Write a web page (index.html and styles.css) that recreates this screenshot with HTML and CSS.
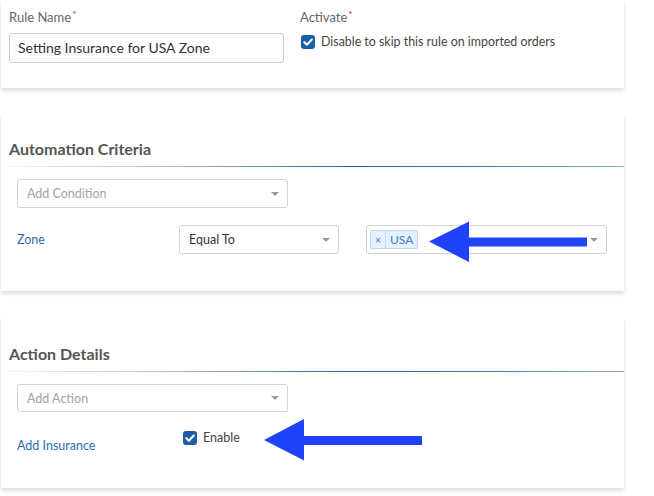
FILE: index.html
```
<!DOCTYPE html>
<html>
<head>
<meta charset="utf-8">
<link rel="stylesheet" href="styles.css">
</head>
<body>
<div class="page">
  <section class="card card-rule">
    <div class="field name-field">
      <div class="label">Rule Name<span class="req">*</span></div>
      <div class="input">Setting Insurance for USA Zone</div>
    </div>
    <div class="field">
      <div class="label">Activate<span class="req">*</span></div>
      <div class="check-row top-check">
        <span class="checkbox"><svg viewBox="0 0 14 14" width="14" height="14"><path d="M3.3 7.2 L5.9 9.7 L10.8 4.6" fill="none" stroke="#fff" stroke-width="2.1" stroke-linecap="round" stroke-linejoin="round"/></svg></span>
        <span class="check-text">Disable to skip this rule on imported orders</span>
      </div>
    </div>
  </section>

  <section class="card card-section card-criteria">
    <h2 class="section-title">Automation Criteria</h2>
    <div class="section-body">
      <div class="select wide"><span class="placeholder">Add Condition</span><span class="caret"></span></div>
      <div class="row row-zone">
        <div class="row-label">Zone</div>
        <div class="select mid"><span class="value">Equal To</span><span class="caret"></span></div>
        <div class="select multi">
          <span class="tag"><span class="tag-x">×</span><span class="tag-text">USA</span></span>
          <span class="spacer"></span>
          <span class="clear">×</span>
          <span class="caret"></span>
        </div>
      </div>
    </div>
  </section>

  <section class="card card-section card-action">
    <h2 class="section-title">Action Details</h2>
    <div class="section-body">
      <div class="select wide"><span class="placeholder">Add Action</span><span class="caret"></span></div>
      <div class="row row-ins">
        <div class="row-label ins-label">Add Insurance</div>
        <div class="check-row enable-check">
          <span class="checkbox"><svg viewBox="0 0 14 14" width="14" height="14"><path d="M3.3 7.2 L5.9 9.7 L10.8 4.6" fill="none" stroke="#fff" stroke-width="2.1" stroke-linecap="round" stroke-linejoin="round"/></svg></span>
          <span class="check-text enable-text">Enable</span>
        </div>
      </div>
    </div>
  </section>

  <svg class="arrows" width="654" height="496" viewBox="0 0 654 496">
    <polygon points="429,241.5 469,221.5 469,262" fill="#1f43fb"/>
    <rect x="468" y="237.5" width="119" height="9" fill="#1f43fb"/>
    <polygon points="264,440 304,419 304,460.5" fill="#1f43fb"/>
    <rect x="303" y="436" width="119" height="9" fill="#1f43fb"/>
  </svg>
</div>
</body>
</html>
```
FILE: styles.css
```
* { box-sizing: border-box; }
html, body { margin: 0; padding: 0; background: #fff; }
body {
  font-family: Lato, "Open Sans", Arial, sans-serif;
  color: #444;
  width: 654px;
  height: 496px;
  overflow: hidden;
}
.page { position: relative; width: 654px; height: 496px; }

.card {
  margin-left: 1px;
  width: 623px;
  background: #fff;
  box-shadow: 0 3px 4px rgba(0, 0, 0, 0.13), 0 0 1px rgba(0, 0, 0, 0.06);
}

.card-rule {
  display: flex;
  gap: 16px;
  height: 88px;
  padding: 9px 8px 0 8px;
}
.name-field { width: 275px; }
.label {
  font-size: 13px;
  line-height: 16px;
  height: 16px;
  color: #666;
}
.req { color: #e5252a; font-size: 10px; line-height: 0; vertical-align: 4px; margin-left: 1px; }
.input {
  margin-top: 8px;
  height: 30px;
  border: 1px solid #cfcfcf;
  border-radius: 3px;
  padding: 0 8px;
  font-size: 14px;
  line-height: 28px;
  color: #333;
}

.check-row { display: flex; align-items: center; }
.top-check { margin-top: 9px; height: 16px; padding-left: 1px; }
.checkbox {
  width: 14px;
  height: 14px;
  border-radius: 3px;
  background: #1d5ea8;
  display: inline-flex;
  flex: none;
}
.checkbox svg { display: block; }
.check-text { margin-left: 6px; font-size: 12.4px; color: #444; line-height: 16px; }

.card-criteria { margin-top: 26px; padding: 0 0 37px 8px; }
.card-action { margin-top: 27px; padding: 0 0 34px 8px; }
.section-title {
  margin: 0;
  font-size: 16px;
  line-height: 20px;
  font-weight: 700;
  color: #555;
  padding-bottom: 7px;
  border-bottom: 1px solid transparent;
  border-image: linear-gradient(to right, #f1f5fa 0%, #a9c3e0 25%, #2d64a3 55%, #3a6fac 70%, #86acd8 100%) 1;
}
.card-criteria .section-title { padding-top: 25px; }
.card-action .section-title { padding-top: 26px; }

.section-body { padding-left: 8px; padding-top: 12px; }

.select {
  display: flex;
  align-items: center;
  height: 29px;
  border: 1px solid #d3d3d3;
  border-radius: 3px;
  padding: 0 8px 0 9px;
  font-size: 12.5px;
}
.card-action .select.wide { height: 28px; }
.select.wide { width: 271px; }
.select.mid { width: 160px; }
.select.multi { width: 241px; padding-left: 3px; }
.placeholder { flex: 1; color: #a3a3a3; }
.value { flex: 1; color: #333; }
.caret {
  width: 0; height: 0;
  border-left: 4px solid transparent;
  border-right: 4px solid transparent;
  border-top: 4px solid #999;
  flex: none;
}
.spacer { flex: 1; }
.clear { color: #bbb; font-size: 14px; margin-right: 8px; line-height: 1; }

.row { display: flex; }
.row-zone { margin-top: 17px; align-items: center; }
.row-label {
  width: 162px;
  font-size: 12.5px;
  color: #2d6db5;
  flex: none;
}
.row-zone .select.mid { margin-right: 27px; }

.tag {
  display: flex;
  height: 19px;
  border: 1px solid #bcd8f5;
  background: #e5f1fd;
  border-radius: 2px;
  color: #3a7fd6;
  font-size: 12px;
  line-height: 17px;
}
.tag-x { width: 15px; text-align: center; border-right: 1px solid #bcd8f5; font-size: 11px; }
.tag-text { padding: 0 4px 0 4px; }

.row-ins { margin-top: 15px; align-items: flex-start; }
.ins-label { margin-top: 11px; line-height: 16px; }
.enable-check { height: 21px; padding-left: 4px; }
.enable-text { font-size: 12.5px; }

.arrows { position: absolute; left: 0; top: 0; pointer-events: none; }
```
